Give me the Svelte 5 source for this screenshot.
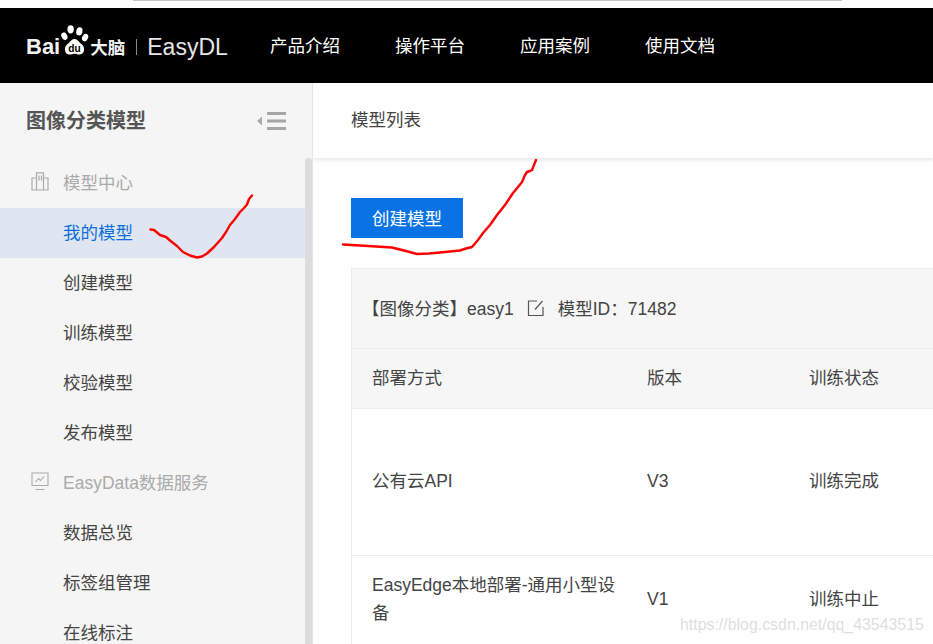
<script>
  const groups = [
    { title: '模型中心', icon: 'building', items: ['我的模型', '创建模型', '训练模型', '校验模型', '发布模型'] },
    { title: 'EasyData数据服务', icon: 'chart', items: ['数据总览', '标签组管理', '在线标注'] }
  ];
  const nav = ['产品介绍', '操作平台', '应用案例', '使用文档'];
  const rows = [
    { name: '公有云API', version: 'V3', status: '训练完成', tall: true },
    { name: 'EasyEdge本地部署-通用小型设备', version: 'V1', status: '训练中止', tall: false }
  ];
</script>

<div class="page">
  <div class="strip"><div class="strip-line"></div></div>

  <header class="topbar">
    <div class="logo">
      <span class="bai">Bai</span>
      <svg class="paw" width="29" height="32" viewBox="0 0 30 32">
        <ellipse cx="4.500" cy="12" rx="3" ry="4" transform="rotate(-25 4.500 12)" fill="#fff" />
        <ellipse cx="11" cy="5" rx="3.300" ry="4.300" fill="#fff" />
        <ellipse cx="20" cy="7" rx="3.200" ry="4.300" transform="rotate(12 20 7)" fill="#fff" />
        <ellipse cx="26" cy="13.500" rx="3" ry="4" transform="rotate(25 26 13.500)" fill="#fff" />
        <path d="M15 15c-3.500 0-4.500 3.500-7.500 5.500-3.500 2.500-3.500 10.500 2 10.500 2.500 0 3.500-.8 5.500-.8s3 .8 5.500.8c5.500 0 5.500-8 2-10.500-3-2-4-5.500-7.500-5.500z" fill="#fff" />
        <text x="15" y="28.500" text-anchor="middle" class="du">du</text>
      </svg>
      <span class="brain">大脑</span>
      <span class="sep"></span>
      <span class="easydl">EasyDL</span>
    </div>
    <nav class="nav">
      {#each nav as n}
        <span>{n}</span>
      {/each}
    </nav>
  </header>

  <div class="body">
    <aside class="side">
      <div class="side-head">
        <span class="side-title">图像分类模型</span>
        <svg width="30" height="18" viewBox="0 0 30 18">
          <path d="M0 9l5-4.500v9z" fill="#aaa" />
          <path d="M10 1.500h19M10 9h19M10 16.500h19" stroke="#a6a6a6" stroke-width="3" />
        </svg>
      </div>
      <div class="menu">
        {#each groups as g}
          <div class="group">
            {#if g.icon === 'building'}
              <svg class="gicon" width="18" height="19" viewBox="0 0 18 19" fill="none" stroke="#aaa" stroke-width="1.200">
                <path d="M5.500 18V.8h7V18M5.500 6H1v12h16V6h-4.500M8 3.500v5M10.500 3.500v5" />
              </svg>
            {:else}
              <svg class="gicon" width="18" height="19" viewBox="0 0 18 19" fill="none" stroke="#aaa" stroke-width="1.100">
                <path d="M1 1h16v12.500H1zM4.500 17.500h9M4.500 10l3-3.500 2 2L13 4.500" />
              </svg>
            {/if}
            <span>{g.title}</span>
          </div>
          {#each g.items as item}
            <div class="item" class:active={item === '我的模型'}>{item}</div>
          {/each}
        {/each}
      </div>
      <div class="scrollbar"></div>
    </aside>

    <main class="main">
      <div class="crumb">模型列表</div>
      <div class="content">
        <button class="create">创建模型</button>
        <section class="card">
          <div class="card-head">
            <span class="model-name">【图像分类】easy1</span>
            <svg width="18" height="18" viewBox="0 0 18 18" fill="none" stroke="#555" stroke-width="1.200">
              <path d="M16 8v8.500H1.500V2H10M8 10.500L15.500 2" />
            </svg>
            <span>模型ID：71482</span>
          </div>
          <div class="row thead">
            <div>部署方式</div>
            <div>版本</div>
            <div>训练状态</div>
          </div>
          {#each rows as r}
            <div class="row" class:tall={r.tall}>
              <div>{r.name}</div>
              <div>{r.version}</div>
              <div>{r.status}</div>
            </div>
          {/each}
        </section>
      </div>
    </main>
  </div>

  <svg class="marks" width="933" height="644" viewBox="0 0 933 644" fill="none" stroke="#f00" stroke-width="2.400" stroke-linejoin="round" stroke-linecap="round">
    <path d="M150.500 229.500L154 230L160 235L166 237L170 240.500L177 246L183 252L190 255.500L197 257.500L202 256.500L207 253.500L214 247L222 238L226 232L230 225L235 219L240 212L244 208L247 204.500L249 199L252 195.500" />
    <path d="M343 244.500L360 245.500L376 246.500L392 247.500L404 250.500L417 254L429 253.500L440 252.500L450 251.500L460 250.500L466 248.500L472 247L478 240L483 233L490 225L497 215L505 205L513 193L518 187L522 182L525 175L527 172L530 171L532 170L534 165L536 160" />
  </svg>
  <div class="watermark">https://blog.csdn.net/qq_43543515</div>
</div>

<style>
  :global(body) {
    margin: 0;
    background: #fff;
  }

  .page {
    position: relative;
    width: 933px;
    height: 644px;
    overflow: hidden;
    display: flex;
    flex-direction: column;
    font-family: "Liberation Sans", "Noto Sans CJK SC", sans-serif;
    font-size: 17.5px;
    color: #444;
  }

  .strip {
    height: 8px;
    flex: none;
    background: #fdfdfd;
  }

  .strip-line {
    margin-left: 133px;
    width: 709px;
    height: 1px;
    background: #c4c4c4;
  }

  .topbar {
    height: 75px;
    flex: none;
    background: #000;
    color: #fff;
    display: flex;
    align-items: center;
    padding-left: 26px;
  }

  .logo {
    display: flex;
    align-items: center;
    width: 244px;
    color: #f2f2f2;
  }

  .bai {
    font-weight: 700;
    font-size: 22px;
    margin-top: 3px;
  }

  .paw {
    flex: none;
    margin-bottom: 11px;
  }

  .du {
    font-family: "Liberation Sans", sans-serif;
    font-size: 10.500px;
    font-weight: 700;
    fill: #000;
  }

  .brain {
    font-size: 17.500px;
    font-weight: 700;
    margin-top: 1px;
    margin-left: 1px;
  }

  .sep {
    width: 1px;
    height: 16px;
    background: #888;
    margin: 2px 10px 0 11px;
  }

  .easydl {
    font-size: 23px;
    margin-top: 3px;
    color: #e6e6e6;
  }

  .nav {
    display: flex;
    gap: 55px;
    font-size: 17.500px;
    margin-bottom: 2px;
  }

  .body {
    flex: 1;
    display: flex;
    min-height: 0;
  }

  .side {
    position: relative;
    width: 312px;
    flex: none;
    background: #f5f5f5;
    border-right: 1px solid #e6e6e6;
    overflow: hidden;
  }

  .side-head {
    height: 75px;
    display: flex;
    align-items: center;
    justify-content: space-between;
    padding: 0 25px 0 26px;
    font-size: 20px;
    font-weight: 700;
    color: #555;
  }

  .side-title {
    margin-bottom: 2px;
  }

  .menu {
    width: 305px;
  }

  .group,
  .item {
    box-sizing: border-box;
    height: 50px;
    display: flex;
    align-items: center;
    padding-bottom: 4px;
  }

  .group {
    padding-left: 31px;
    gap: 14px;
    color: #aaa;
  }

  .gicon {
    flex: none;
  }

  .item {
    padding-left: 63px;
    color: #444;
  }

  .item.active {
    background: #dfe6f1;
    color: #0d6fdc;
  }

  .scrollbar {
    position: absolute;
    left: 305px;
    top: 75px;
    bottom: 0;
    width: 7px;
    background: #dcdcdc;
    border-radius: 3px 3px 0 0;
  }

  .main {
    flex: 1;
    min-width: 0;
  }

  .crumb {
    height: 75px;
    line-height: 74px;
    padding-left: 38px;
    box-shadow: 0 2px 4px rgba(0, 0, 0, 0.1);
  }

  .content {
    padding: 40px 0 0 38px;
  }

  .create {
    display: block;
    width: 112px;
    height: 40px;
    padding: 0 0 2px;
    border: 0;
    background: #0973e6;
    color: #fff;
    font: inherit;
  }

  .card {
    margin-top: 30px;
    border: 1px solid #ececec;
    border-right: 0;
    border-bottom: 0;
  }

  .card-head {
    box-sizing: border-box;
    height: 80px;
    display: flex;
    align-items: center;
    background: #f6f6f6;
    padding: 0 0 2px 10px;
    border-bottom: 1px solid #ececec;
  }

  .model-name {
    margin-right: 13px;
  }

  .card-head svg {
    margin-right: 13px;
  }

  .row {
    display: grid;
    grid-template-columns: 295px 162px 1fr;
    min-height: 89px;
    line-height: 28px;
    align-items: center;
    border-bottom: 1px solid #ececec;
    padding-bottom: 2px;
    box-sizing: border-box;
  }

  .row > div {
    padding-right: 20px;
  }

  .row > div:first-child {
    padding-left: 20px;
  }

  .thead {
    min-height: 60px;
    background: #f6f6f6;
  }

  .tall {
    min-height: 147px;
  }

  .marks {
    position: absolute;
    left: 0;
    top: 0;
    pointer-events: none;
  }

  .watermark {
    position: absolute;
    left: 680px;
    top: 616px;
    font-size: 15.900px;
    color: #dfdfdf;
  }
</style>
